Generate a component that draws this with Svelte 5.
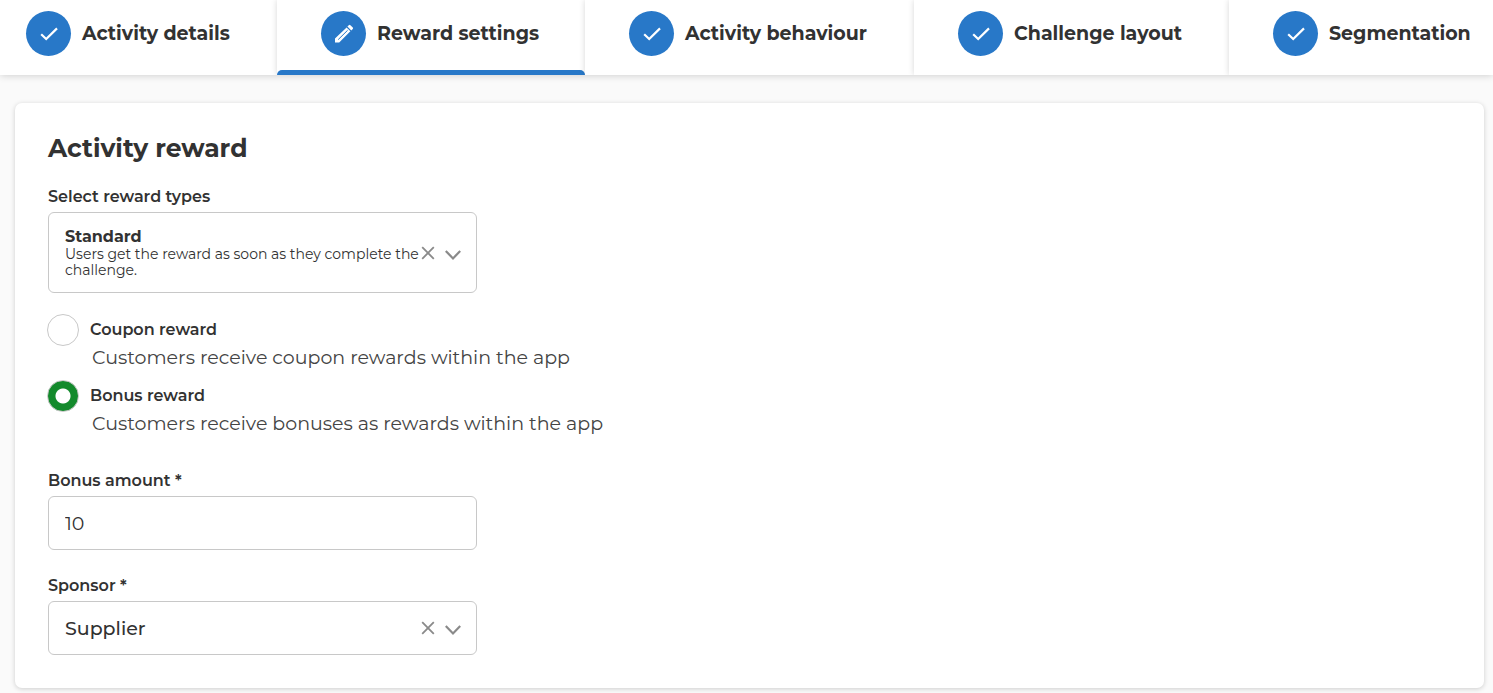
<script lang="ts">
  type Step = { label: string; icon: "check" | "pencil" };

  const steps: Step[] = [
    { label: "Activity details", icon: "check" },
    { label: "Reward settings", icon: "pencil" },
    { label: "Activity behaviour", icon: "check" },
    { label: "Challenge layout", icon: "check" },
    { label: "Segmentation", icon: "check" }
  ];

  const rewardTypes = [
    {
      value: "standard",
      name: "Standard",
      description: "Users get the reward as soon as they complete the challenge."
    }
  ];

  const rewardKinds = [
    { value: "coupon", name: "Coupon reward", description: "Customers receive coupon rewards within the app" },
    { value: "bonus", name: "Bonus reward", description: "Customers receive bonuses as rewards within the app" }
  ];

  let activeStep = $state(1);
  let rewardType = $state("standard");
  let rewardKind = $state("bonus");
  let bonusAmount = $state("10");
  let sponsor = $state("supplier");

  const selectedType = $derived(rewardTypes.find(t => t.value === rewardType));
</script>

{#snippet clearButton(label: string, onclear: () => void)}
  <button class="clear" type="button" aria-label={label} onclick={onclear}>
    <svg viewBox="0 0 14 14" width="14" height="14" aria-hidden="true">
      <path d="M1.2 1.2 12.8 12.8M12.8 1.2 1.2 12.8" fill="none" stroke="#8a8a8a" stroke-width="1.8" />
    </svg>
  </button>
{/snippet}

{#snippet chevron()}
  <svg class="chevron" viewBox="0 0 16 10" width="16" height="10" aria-hidden="true">
    <path d="M0.8 1 8 8.4 15.2 1" fill="none" stroke="#8a8a8a" stroke-width="2.2" />
  </svg>
{/snippet}

<nav class="steps" aria-label="Steps">
  {#each steps as step, i (step.label)}
    <button
      class="step"
      class:active={i === activeStep}
      type="button"
      aria-current={i === activeStep ? "step" : undefined}
      onclick={() => (activeStep = i)}
    >
      <span class="badge">
        {#if step.icon === "check"}
          <svg viewBox="0 0 20 20" width="20" height="20" aria-hidden="true">
            <path d="M2.2 10.2 7.2 15 18 4.4" fill="none" stroke="#fff" stroke-width="2.2" />
          </svg>
        {:else}
          <svg viewBox="0 0 20 20" width="20" height="20" aria-hidden="true">
            <path
              d="M1 18.6V14.6L12.6 3.4 16.4 7.2 5.2 18.6ZM13.4 2.6 14.8 1.2Q15.6 0.5 16.4 1.2L18.8 3.6Q19.4 4.4 18.8 5.1L17.3 6.5Z"
              fill="#fff"
            />
            <path d="M4.2 15.6 13.6 6.3" fill="none" stroke="#2878c8" stroke-width="1" />
          </svg>
        {/if}
      </span>
      <span class="step-label">{step.label}</span>
    </button>
  {/each}
</nav>

<main class="card">
  <h2>Activity reward</h2>

  <div class="field">
    <label for="reward-type">Select reward types</label>
    <div class="control rich">
      <div class="choice" aria-hidden="true">
        {#if selectedType}
          <strong>{selectedType.name}</strong>
          <span>{selectedType.description}</span>
        {/if}
      </div>
      <select id="reward-type" class="cover" bind:value={rewardType}>
        {#each rewardTypes as type (type.value)}
          <option value={type.value}>{type.name}</option>
        {/each}
      </select>
      {@render clearButton("Clear reward type", () => (rewardType = ""))}
      {@render chevron()}
    </div>
  </div>

  <div class="kinds" role="radiogroup" aria-label="Reward">
    {#each rewardKinds as kind (kind.value)}
      <div class="kind">
        <label class="kind-name">
          <input type="radio" name="reward-kind" value={kind.value} bind:group={rewardKind} />
          <span>{kind.name}</span>
        </label>
        <p>{kind.description}</p>
      </div>
    {/each}
  </div>

  <div class="field">
    <label for="bonus-amount">Bonus amount *</label>
    <div class="control">
      <input id="bonus-amount" type="text" inputmode="numeric" bind:value={bonusAmount} />
    </div>
  </div>

  <div class="field">
    <label for="sponsor">Sponsor *</label>
    <div class="control">
      <select id="sponsor" bind:value={sponsor}>
        <option value="supplier">Supplier</option>
      </select>
      {@render clearButton("Clear sponsor", () => (sponsor = ""))}
      {@render chevron()}
    </div>
  </div>
</main>

<style>
  :global(body) {
    background: #fafafa;
    color: #323232;
    font-family: Montserrat, Inter, sans-serif;
    font-size: 16px;
  }

  :global(*) {
    box-sizing: border-box;
  }

  button,
  input,
  select {
    font-family: inherit;
    color: inherit;
  }

  .steps {
    display: grid;
    grid-template-columns: 277fr 308fr 329fr 315fr 264fr;
    overflow: hidden;
    background: #fff;
    box-shadow: 0 0 8px rgba(0, 0, 0, 0.2);
  }

  .step {
    position: relative;
    display: flex;
    gap: 11px;
    min-width: 0;
    padding: 11px 0 19px 44px;
    border: 0;
    background: #fff;
    box-shadow: 0 0 6px rgba(0, 0, 0, 0.16);
    align-items: center;
    text-align: left;
    white-space: nowrap;
    cursor: pointer;
  }

  .step:first-child {
    padding-left: 26px;
  }

  .step.active::after {
    content: "";
    position: absolute;
    inset: auto 0 0;
    height: 5px;
    border-radius: 5px 5px 0 0;
    background: #2878c8;
  }

  .badge {
    display: flex;
    flex: none;
    align-items: center;
    justify-content: center;
    width: 45px;
    height: 45px;
    border-radius: 50%;
    background: #2878c8;
  }

  .step-label {
    font-size: 19px;
    font-weight: 700;
    line-height: 24px;
  }

  .card {
    margin: 28px 9px 5px 15px;
    padding: 27px 33px 33px;
    border-radius: 7px;
    background: #fff;
    box-shadow: 0 1px 5px rgba(0, 0, 0, 0.18);
  }

  h2 {
    margin: 0 0 19px;
    font-size: 25px;
    font-weight: 700;
    line-height: 36px;
  }

  .field {
    max-width: 429px;
  }

  .field + .field {
    margin-top: 24px;
  }

  .field > label {
    display: block;
    margin-bottom: 3px;
    font-weight: 600;
    line-height: 24px;
  }

  .control {
    position: relative;
    display: flex;
    align-items: center;
    height: 54px;
    padding: 0 15px 0 16px;
    border: 1px solid #c8c8c8;
    border-radius: 6px;
    background: #fff;
  }

  .control.rich {
    height: auto;
    padding-top: 15px;
    padding-bottom: 14px;
  }

  .control > input,
  .control > select {
    flex: 1;
    min-width: 0;
    height: 100%;
    padding: 0;
    border: 0;
    outline: 0;
    background: transparent;
    font-size: 19px;
    font-weight: 500;
    appearance: none;
  }

  .control > input {
    font-weight: 400;
  }

  .control > .cover {
    position: absolute;
    inset: 0;
    width: 100%;
    opacity: 0;
  }

  .choice {
    flex: 1;
    min-height: 50px;
    font-size: 14px;
    line-height: 16px;
  }

  .choice strong {
    display: block;
    font-size: 16px;
    font-weight: 700;
    line-height: 18px;
  }

  .clear {
    position: relative;
    display: flex;
    flex: none;
    margin-right: 10px;
    padding: 0;
    border: 0;
    background: none;
    cursor: pointer;
  }

  .chevron {
    flex: none;
    margin-top: 4px;
    pointer-events: none;
  }

  .kinds {
    display: grid;
    gap: 10px;
    margin: 21px 0 33px -1px;
  }

  .kind-name {
    display: inline-flex;
    align-items: center;
    gap: 11px;
    font-weight: 600;
    line-height: 24px;
    vertical-align: top;
  }

  .kind-name input {
    width: 32px;
    height: 32px;
    margin: 0;
    border: 1px solid #c8c8c8;
    border-radius: 50%;
    background: #fff;
    appearance: none;
  }

  .kind-name input:checked {
    background: radial-gradient(circle, #fff 7px, #138a2c 8px);
  }

  .kind p {
    margin: 0;
    padding-left: 45px;
    color: #444;
    font-size: 19px;
    font-weight: 400;
    line-height: 24px;
  }
</style>
